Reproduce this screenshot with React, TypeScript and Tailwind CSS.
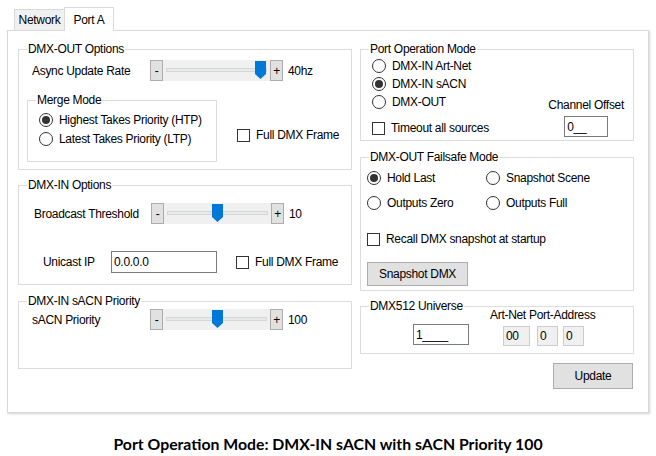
import type { ReactNode } from "react";

function GroupBox({ title, className, children }: { title: string; className: string; children?: ReactNode }) {
  return (
    <div className={`border border-[#dcdcdc] ${className}`}>
      <div className="-mt-[8px] ml-[8px] w-fit bg-white px-[1px] leading-[14px]">{title}</div>
      {children}
    </div>
  );
}

function Radio({ checked = false }: { checked?: boolean }) {
  return (
    <span className="flex h-[14px] w-[14px] shrink-0 items-center justify-center rounded-full border border-[#333333] bg-white">
      {checked && <span className="h-[8px] w-[8px] rounded-full bg-[#333333]" />}
    </span>
  );
}

function Check() {
  return <span className="h-[13px] w-[13px] shrink-0 border border-[#333333] bg-white" />;
}

function Slider({ pos }: { pos: number }) {
  return (
    <div className="flex h-[21px]">
      <div className="flex w-[13px] items-center justify-center border border-[#adadad] bg-[#e1e1e1]">-</div>
      <div className="relative w-[107px] bg-[#f0f0f0]">
        <div className="absolute left-[3px] right-[3px] top-[8px] h-[4px] border border-[#d6d6d6] bg-[#e7eaea]" />
        <svg className="absolute top-[1px]" style={{ left: pos }} width="11" height="18" viewBox="0 0 11 18">
          <path d="M0 0H11V13L5.5 18L0 13Z" fill="#0078d7" />
        </svg>
      </div>
      <div className="flex w-[13px] items-center justify-center border border-[#adadad] bg-[#e1e1e1]">+</div>
    </div>
  );
}

function Option({ label, checked }: { label: string; checked?: boolean }) {
  return (
    <div className="flex h-[18px] items-center gap-[6px]">
      <Radio checked={checked} />
      <span>{label}</span>
    </div>
  );
}

export default function App() {
  return (
    <div className="h-[456px] w-[656px] overflow-hidden bg-white [font-family:'Liberation_Sans',Arial,sans-serif] text-[12px] leading-[14px] tracking-[-0.3px] text-black">
      {/* tabs */}
      <div className="flex items-end pl-[14px] pt-[7px]">
        <div className="flex h-[21px] w-[50px] items-center justify-center border-l border-t border-[#d9d9d9] bg-[#f0f0f0]">Network</div>
        <div className="relative z-10 -mb-px flex h-[24px] w-[50px] items-center justify-center border-x border-t border-[#d9d9d9] bg-white">
          Port A
        </div>
      </div>

      <div className="ml-[7px] flex h-[383px] w-[642px] gap-[8px] border border-[#d9d9d9] bg-white pl-[10px] pr-[13px] pt-[18px] shadow-[1px_1px_2px_rgba(0,0,0,0.18)]">
        {/* left column */}
        <div className="flex w-[334px] flex-col">
          <GroupBox title="DMX-OUT Options" className="h-[121px]">
            <div className="mt-[4px] flex items-center">
              <span className="ml-[13px] w-[118px]">Async Update Rate</span>
              <Slider pos={92} />
              <span className="ml-[5px]">40hz</span>
            </div>
            <div className="mt-[19px] flex items-start">
              <GroupBox title="Merge Mode" className="ml-[8px] h-[62px] w-[190px]">
                <div className="ml-[11px] mt-[4px] flex flex-col gap-[1px]">
                  <Option label="Highest Takes Priority (HTP)" checked />
                  <Option label="Latest Takes Priority (LTP)" />
                </div>
              </GroupBox>
              <div className="ml-[20px] mt-[28px] flex items-center gap-[6px]">
                <Check />
                <span>Full DMX Frame</span>
              </div>
            </div>
          </GroupBox>

          <GroupBox title="DMX-IN Options" className="mt-[15px] h-[100px]">
            <div className="mt-[11px] flex items-center">
              <span className="ml-[15px] w-[117px]">Broadcast Threshold</span>
              <Slider pos={48} />
              <span className="ml-[5px]">10</span>
            </div>
            <div className="mt-[27px] flex h-[22px] items-center">
              <span className="ml-[24px] w-[68px]">Unicast IP</span>
              <div className="flex h-[22px] w-[106px] items-center border border-[#7a7a7a] bg-white pl-[2px]">0.0.0.0</div>
              <div className="ml-[19px] flex items-center gap-[6px]">
                <Check />
                <span>Full DMX Frame</span>
              </div>
            </div>
          </GroupBox>

          <GroupBox title="DMX-IN sACN Priority" className="mt-[16px] h-[68px]">
            <div className="mt-[1px] flex items-center">
              <span className="ml-[13px] w-[118px]">sACN Priority</span>
              <Slider pos={49} />
              <span className="ml-[5px]">100</span>
            </div>
          </GroupBox>
        </div>

        {/* right column */}
        <div className="flex w-[274px] flex-col">
          <GroupBox title="Port Operation Mode" className="h-[92px]">
            <div className="flex">
              <div className="ml-[11px] mt-[1px] flex flex-col">
                <Option label="DMX-IN Art-Net" />
                <Option label="DMX-IN sACN" checked />
                <Option label="DMX-OUT" />
                <div className="mt-[8px] flex h-[18px] items-center gap-[6px]">
                  <Check />
                  <span>Timeout all sources</span>
                </div>
              </div>
              <div className="ml-auto mr-[9px] flex flex-col items-center self-end">
                <span>Channel Offset</span>
                <div className="mt-[4px] flex h-[21px] w-[44px] items-center border border-[#7a7a7a] bg-white pl-[2px]">0__</div>
              </div>
            </div>
          </GroupBox>

          <GroupBox title="DMX-OUT Failsafe Mode" className="mt-[16px] h-[134px]">
            <div className="ml-[6px] mt-[5px] grid grid-cols-[119px_auto] gap-y-[7px]">
              <Option label="Hold Last" checked />
              <Option label="Snapshot Scene" />
              <Option label="Outputs Zero" />
              <Option label="Outputs Full" />
            </div>
            <div className="ml-[6px] mt-[18px] flex h-[18px] items-center gap-[6px]">
              <Check />
              <span>Recall DMX snapshot at startup</span>
            </div>
            <div className="ml-[6px] mt-[14px] flex h-[24px] w-[101px] items-center justify-center border border-[#adadad] bg-[#e1e1e1]">
              Snapshot DMX
            </div>
          </GroupBox>

          <GroupBox title="DMX512 Universe" className="mt-[15px] h-[48px]">
            <div className="-mt-[5px] flex items-end">
              <div className="mb-[1px] ml-[52px] flex h-[21px] w-[56px] items-center border border-[#7a7a7a] bg-white pl-[2px]">1____</div>
              <div className="ml-[21px] flex flex-col">
                <span>Art-Net Port-Address</span>
                <div className="ml-[13px] mt-[4px] flex">
                  <div className="flex h-[20px] w-[27px] items-center border border-[#cccccc] bg-[#f0f0f0] pl-[2px]">00</div>
                  <div className="ml-[7px] flex h-[20px] w-[21px] items-center border border-[#cccccc] bg-[#f0f0f0] pl-[2px]">0</div>
                  <div className="ml-[5px] flex h-[20px] w-[21px] items-center border border-[#cccccc] bg-[#f0f0f0] pl-[2px]">0</div>
                </div>
              </div>
            </div>
          </GroupBox>

          <div className="mr-[1px] mt-[9px] flex h-[26px] w-[80px] items-center justify-center self-end border border-[#adadad] bg-[#e1e1e1]">
            Update
          </div>
        </div>
      </div>

      <div className="mt-[21px] text-center [font-family:'Lato',sans-serif] text-[15.8px] font-bold leading-[20px] tracking-normal">
        Port Operation Mode: DMX-IN sACN with sACN Priority 100
      </div>
    </div>
  );
}
